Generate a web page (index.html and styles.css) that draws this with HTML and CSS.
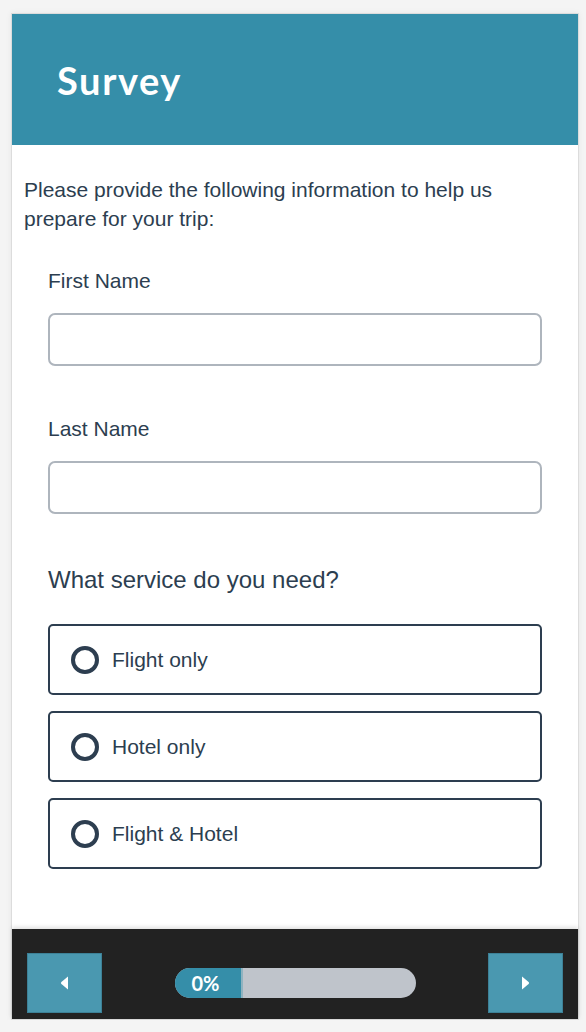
FILE: index.html
```html
<!DOCTYPE html>
<html>
<head>
  <link rel="stylesheet" href="styles.css">
</head>
<body>
  <div class="card">
    <div class="header">
      <h1>Survey</h1>
    </div>

    <div class="content">
      <p class="intro">Please provide the following information to help us prepare for your trip:</p>

      <div class="field">
        <label for="first-name">First Name</label>
        <input type="text" id="first-name" class="text-input">
      </div>

      <div class="field">
        <label for="last-name">Last Name</label>
        <input type="text" id="last-name" class="text-input">
      </div>

      <div class="question">
        <div class="question-title">What service do you need?</div>
        <div class="options">
          <div class="option"><span class="radio"></span>Flight only</div>
          <div class="option"><span class="radio"></span>Hotel only</div>
          <div class="option"><span class="radio"></span>Flight &amp; Hotel</div>
        </div>
      </div>
    </div>

    <div class="footer">
      <button class="nav-btn" aria-label="Previous">
        <svg width="9" height="16" viewBox="0 0 9 16"><path d="M8 1.5 L8 14.5 L1.4 8.9 Q0.4 8 1.4 7.1 Z" fill="#fff"/></svg>
      </button>
      <div class="progress">
        <div class="progress-fill">0%</div>
      </div>
      <button class="nav-btn" aria-label="Next">
        <svg width="9" height="16" viewBox="0 0 9 16"><path d="M1 1.5 L1 14.5 L7.6 8.9 Q8.6 8 7.6 7.1 Z" fill="#fff"/></svg>
      </button>
    </div>
  </div>
</body>
</html>
```

FILE: styles.css
```css
body {
  margin: 0;
  padding: 13px 0 0 11px;
  background: #f4f4f4;
  font-family: "Liberation Sans", Arial, sans-serif;
  color: #2c3e50;
}
.card {
  width: 566px;
  background: white;
  border: 1px solid #dcdcdc;
  box-shadow: 0 0 6px rgba(0, 0, 0, 0.06);
}
.header {
  height: 131px;
  background: #358ea9;
  display: flex;
  align-items: center;
  padding-left: 45px;
}
.header h1 {
  margin: 0;
  color: white;
  font-family: Lato, sans-serif;
  font-weight: 700;
  font-size: 38px;
  letter-spacing: 1.6px;
}
.content {
  padding: 30px 36px 60px 36px;
}
.intro {
  margin: 0 -24px 33px -24px;
  font-size: 21px;
  line-height: 29px;
}
.field {
  margin-bottom: 48px;
}
.field label {
  display: block;
  font-size: 21px;
  line-height: 29px;
  margin-bottom: 18px;
}
.text-input {
  display: block;
  width: 100%;
  height: 53px;
  box-sizing: border-box;
  border: 2.5px solid #aeb5bd;
  border-radius: 7px;
  background: white;
  font-size: 18px;
  padding: 0 12px;
}
.text-input:focus {
  outline: none;
  border-color: #358ea9;
}
.question {
  padding-top: 3px;
}
.question-title {
  font-size: 24px;
  line-height: 30px;
  margin-bottom: 29px;
}
.options {
  display: flex;
  flex-direction: column;
  gap: 16px;
}
.option {
  height: 71px;
  box-sizing: border-box;
  border: 2px solid #2d3e50;
  border-radius: 5px;
  display: flex;
  align-items: center;
  padding-left: 21px;
  font-size: 21px;
  cursor: pointer;
}
.radio {
  width: 28px;
  height: 28px;
  box-sizing: border-box;
  border: 4px solid #2d3e50;
  border-radius: 50%;
  margin-right: 13px;
  flex-shrink: 0;
}
.footer {
  height: 90px;
  box-sizing: border-box;
  background: #222;
  padding: 24px 15px 6px 15px;
  display: flex;
  justify-content: space-between;
  align-items: center;
  box-shadow: 0 -2px 4px rgba(0, 0, 0, 0.12);
}
.nav-btn {
  width: 75px;
  height: 60px;
  background: #4a98b0;
  border: 1px solid #3d8197;
  display: flex;
  align-items: center;
  justify-content: center;
  padding: 0;
  cursor: pointer;
}
.progress {
  width: 241px;
  height: 30px;
  border-radius: 15px;
  background: #bfc4cb;
  overflow: hidden;
  margin-top: -1px;
}
.progress-fill {
  width: 68px;
  height: 100%;
  box-sizing: border-box;
  background: #358ea9;
  border-right: 2px solid #8fb3c0;
  color: white;
  font-family: Lato, sans-serif;
  font-weight: 700;
  font-size: 20px;
  line-height: 30px;
  padding-left: 17px;
}
```
